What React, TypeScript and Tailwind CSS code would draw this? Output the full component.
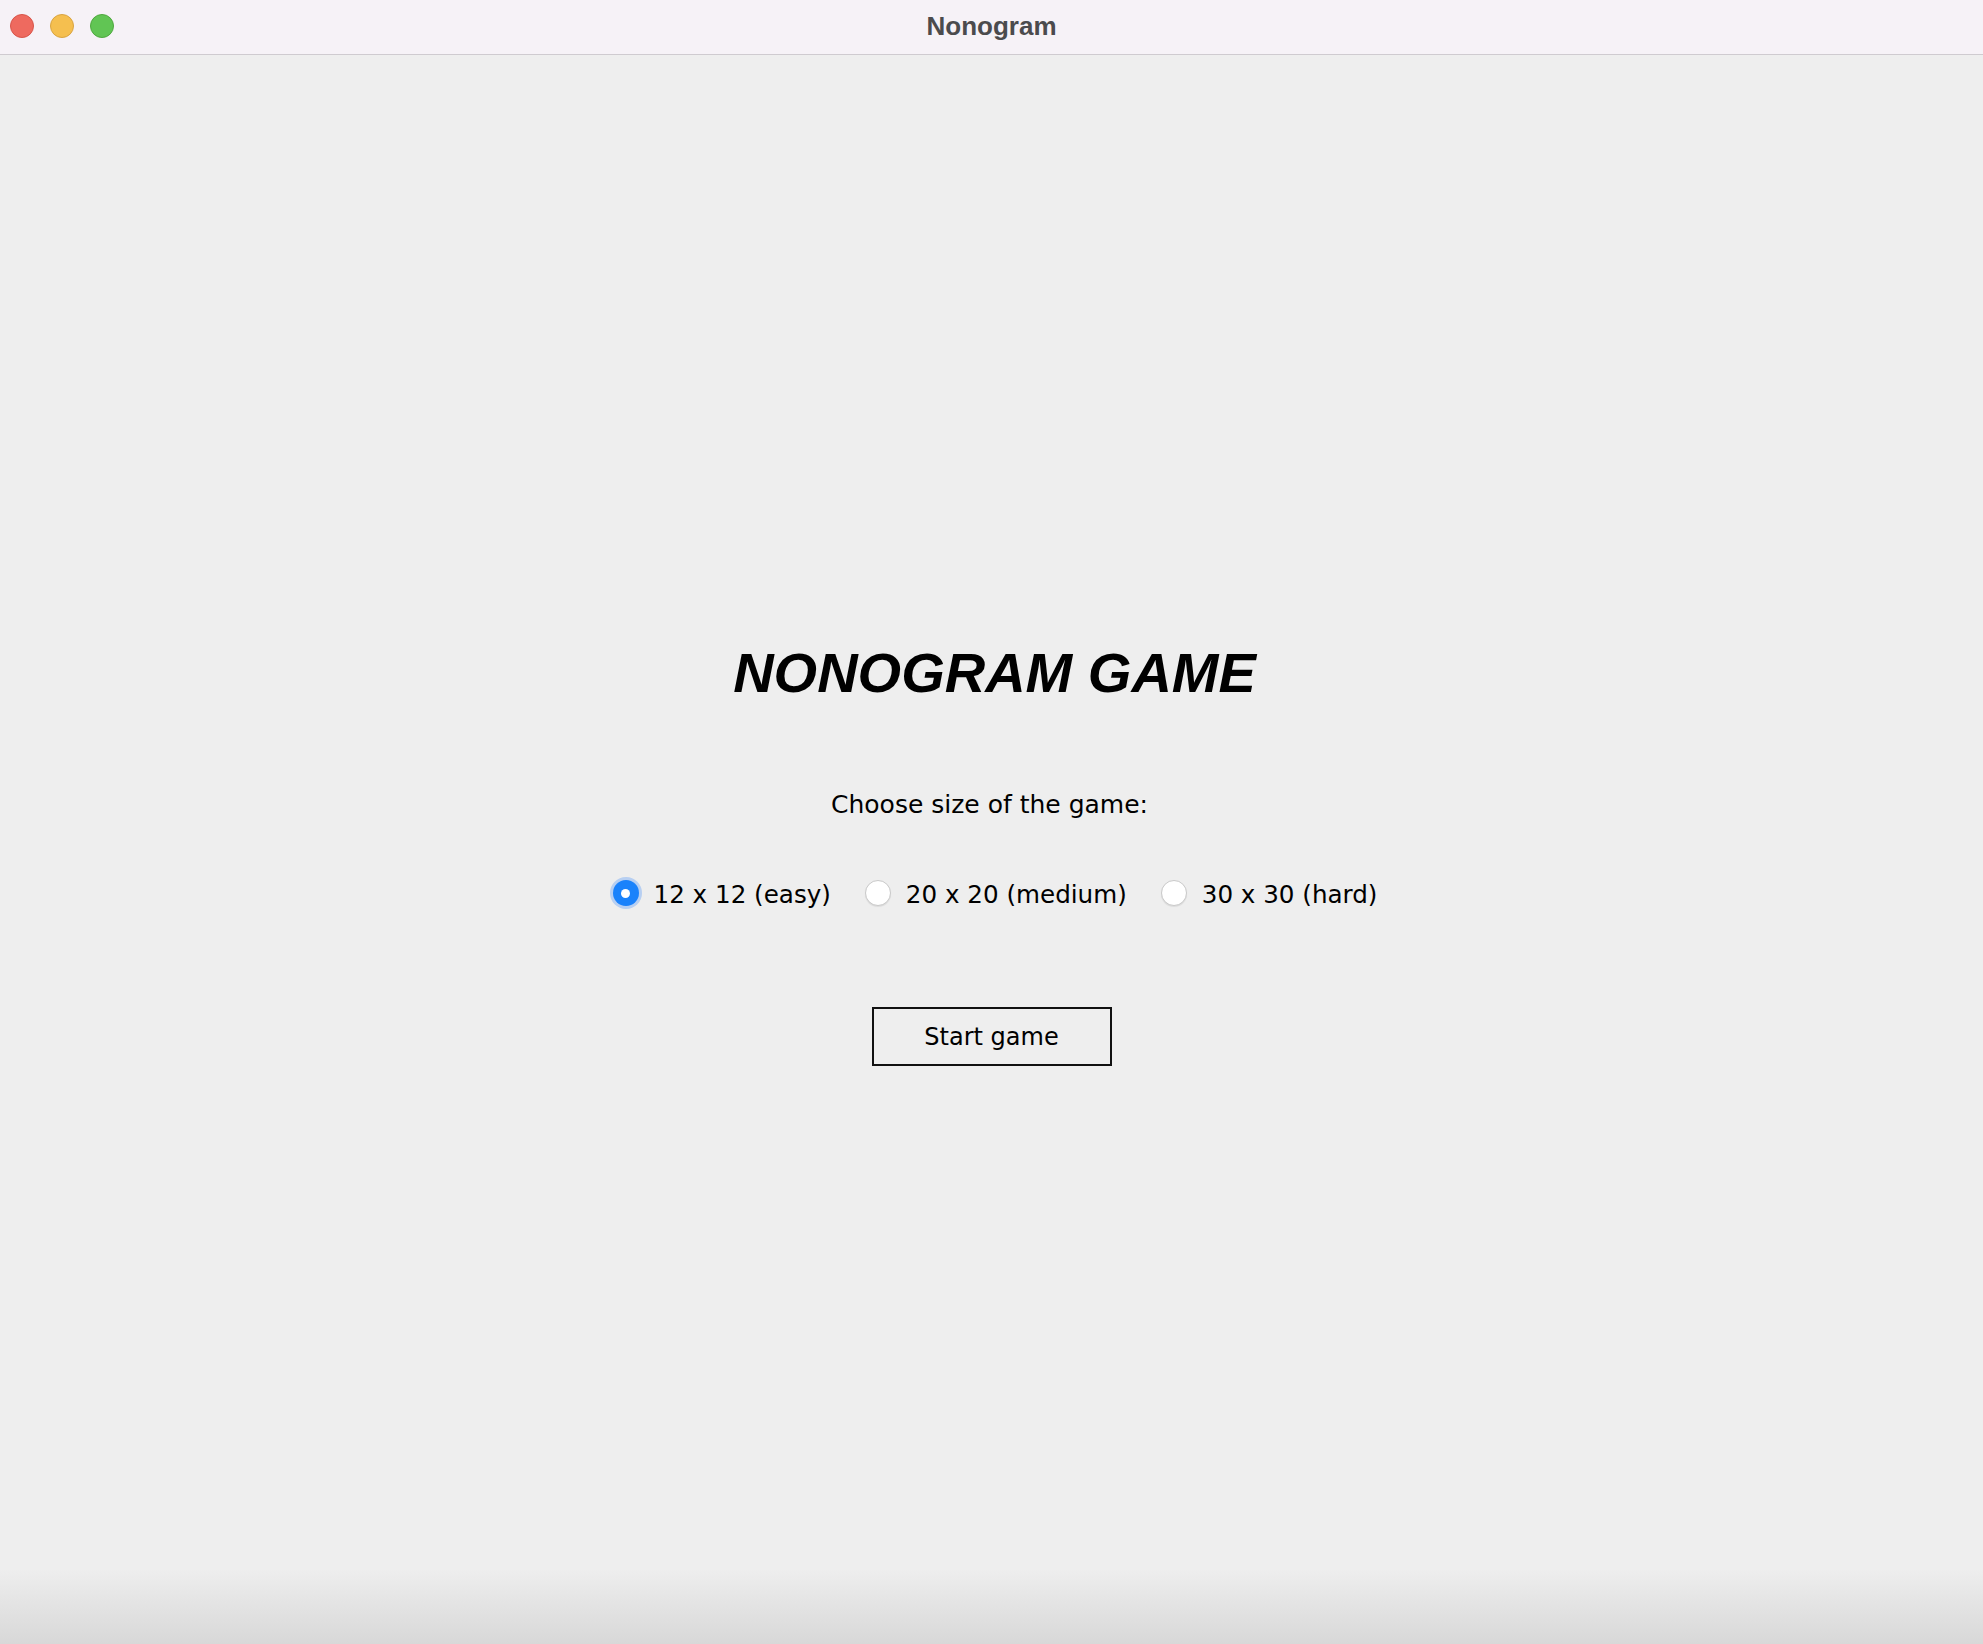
import { useState } from "react";

const sizes = [
  { id: "12", label: "12 x 12 (easy)" },
  { id: "20", label: "20 x 20 (medium)" },
  { id: "30", label: "30 x 30 (hard)" },
];

function TrafficLights() {
  return (
    <div className="flex items-center gap-[16px] pl-[10px]">
      <span className="h-[24px] w-[24px] rounded-full border border-[#d8554a] bg-[#ee6a5f]" />
      <span className="h-[24px] w-[24px] rounded-full border border-[#d9a441] bg-[#f5bf4f]" />
      <span className="h-[24px] w-[24px] rounded-full border border-[#4fa83f] bg-[#61c554]" />
    </div>
  );
}

function Radio({ checked }: { checked: boolean }) {
  if (checked) {
    return (
      <span className="mb-[4px] flex h-[26px] w-[26px] items-center justify-center rounded-full bg-[#1a82fb] shadow-[0_0_0_3px_rgba(80,150,250,0.35)]">
        <span className="h-[9px] w-[9px] rounded-full bg-white" />
      </span>
    );
  }
  return (
    <span className="mb-[4px] h-[26px] w-[26px] rounded-full border border-[#c9c9c9] bg-white shadow-[0_1px_1px_rgba(0,0,0,0.08)]" />
  );
}

export default function App() {
  const [size, setSize] = useState("12");

  return (
    <div className="flex h-screen w-full flex-col bg-[#eeeeee] font-['DejaVu_Sans',sans-serif] text-black">
      <div className="grid h-[55px] grid-cols-[1fr_auto_1fr] items-center border-b border-[#cfcbd0] bg-[#f6f2f7] pb-[3px]">
        <TrafficLights />
        <div className="font-['Liberation_Sans',sans-serif] text-[26px] font-bold leading-[26px] text-[#4b4b4d]">
          Nonogram
        </div>
        <div />
      </div>

      <main className="flex flex-1 flex-col items-center pt-[590px]">
        <h1 className="pl-[6px] font-['Liberation_Sans',sans-serif] text-[56px] font-bold italic leading-[56px]">
          NONOGRAM GAME
        </h1>

        <p className="mt-[92px] pr-[4px] text-[25px] leading-[24px]">
          Choose size of the game:
        </p>

        <div className="mt-[63px] flex items-center gap-[34px] pl-[7px]">
          {sizes.map((s) => (
            <label
              key={s.id}
              className="flex cursor-pointer items-center gap-[15px]"
              onClick={() => setSize(s.id)}
            >
              <Radio checked={size === s.id} />
              <span className="text-[24.6px] leading-[24px]">{s.label}</span>
            </label>
          ))}
        </div>

        <button className="mt-[97px] flex h-[59px] w-[240px] items-center justify-center border-2 border-[#111111] bg-[#eeeeee] text-[24px] leading-[24px]">
          Start game
        </button>
      </main>

      <div className="h-[75px] bg-gradient-to-b from-[#eeeeee] to-[#d8d8d8]" />
    </div>
  );
}
